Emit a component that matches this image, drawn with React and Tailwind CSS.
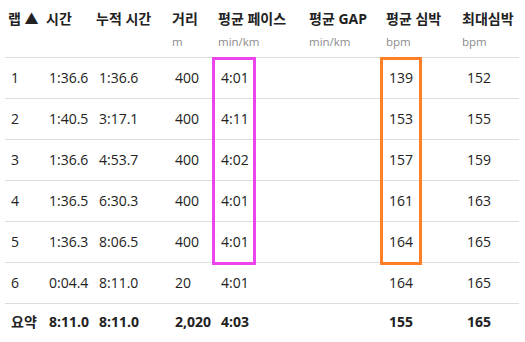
import React from "react";

const rows = [
  ["1", "1:36.6", "1:36.6", "400", "4:01", "", "139", "152"],
  ["2", "1:40.5", "3:17.1", "400", "4:11", "", "153", "155"],
  ["3", "1:36.6", "4:53.7", "400", "4:02", "", "157", "159"],
  ["4", "1:36.5", "6:30.3", "400", "4:01", "", "161", "163"],
  ["5", "1:36.3", "8:06.5", "400", "4:01", "", "164", "165"],
  ["6", "0:04.4", "8:11.0", "20", "4:01", "", "164", "165"],
];
const summary = ["요약", "8:11.0", "8:11.0", "2,020", "4:03", "", "155", "165"];

const headers = [
  ["랩 ▲", ""],
  ["시간", ""],
  ["누적 시간", ""],
  ["거리", "m"],
  ["평균 페이스", "min/km"],
  ["평균 GAP", "min/km"],
  ["평균 심박", "bpm"],
  ["최대심박", "bpm"],
];

const cols = "grid grid-cols-[38px_50px_76px_46px_91px_77px_76px_60px]";

export default function App() {
  return (
    <div
      className="w-[525px] h-[342px] bg-white text-[#222] overflow-hidden"
      style={{ fontFamily: '"Open Sans", "Noto Sans CJK KR", sans-serif' }}
    >
      <div className="relative ml-[5px] w-[514px]">
        <div className={`${cols} h-[58px] border-b border-[#dddddd]`}>
          {headers.map(([h, u], i) => (
            <div key={i} className="pl-[3px] pt-[8px]">
              <div className="text-[14px] font-bold leading-[22px] whitespace-nowrap">{h}</div>
              <div className="text-[11.5px] leading-[14px] mt-[5px] text-[#8c8c8c] whitespace-nowrap">{u}</div>
            </div>
          ))}
        </div>
        {rows.map((r, ri) => (
          <div key={ri} className={`${cols} h-[41px] border-b border-[#dddddd] items-center text-[14px]`}>
            {r.map((c, ci) => (
              <div key={ci} className={`${ci === 7 ? "pl-[8px]" : "pl-[6px]"} whitespace-nowrap leading-[20px]`}>{c}</div>
            ))}
          </div>
        ))}
        <div className={`${cols} h-[36px] items-center text-[14px] font-bold`}>
          {summary.map((c, ci) => (
            <div key={ci} className={`${ci === 7 ? "pl-[8px]" : "pl-[6px]"} whitespace-nowrap leading-[20px]`}>{c}</div>
          ))}
        </div>
        <div className="absolute left-[207px] top-[57px] w-[44px] h-[208px] border-[3px] border-[#ee44ee]" />
        <div className="absolute left-[375px] top-[57px] w-[42px] h-[208px] border-[3px] border-[#ff7f27]" />
      </div>
    </div>
  );
}
